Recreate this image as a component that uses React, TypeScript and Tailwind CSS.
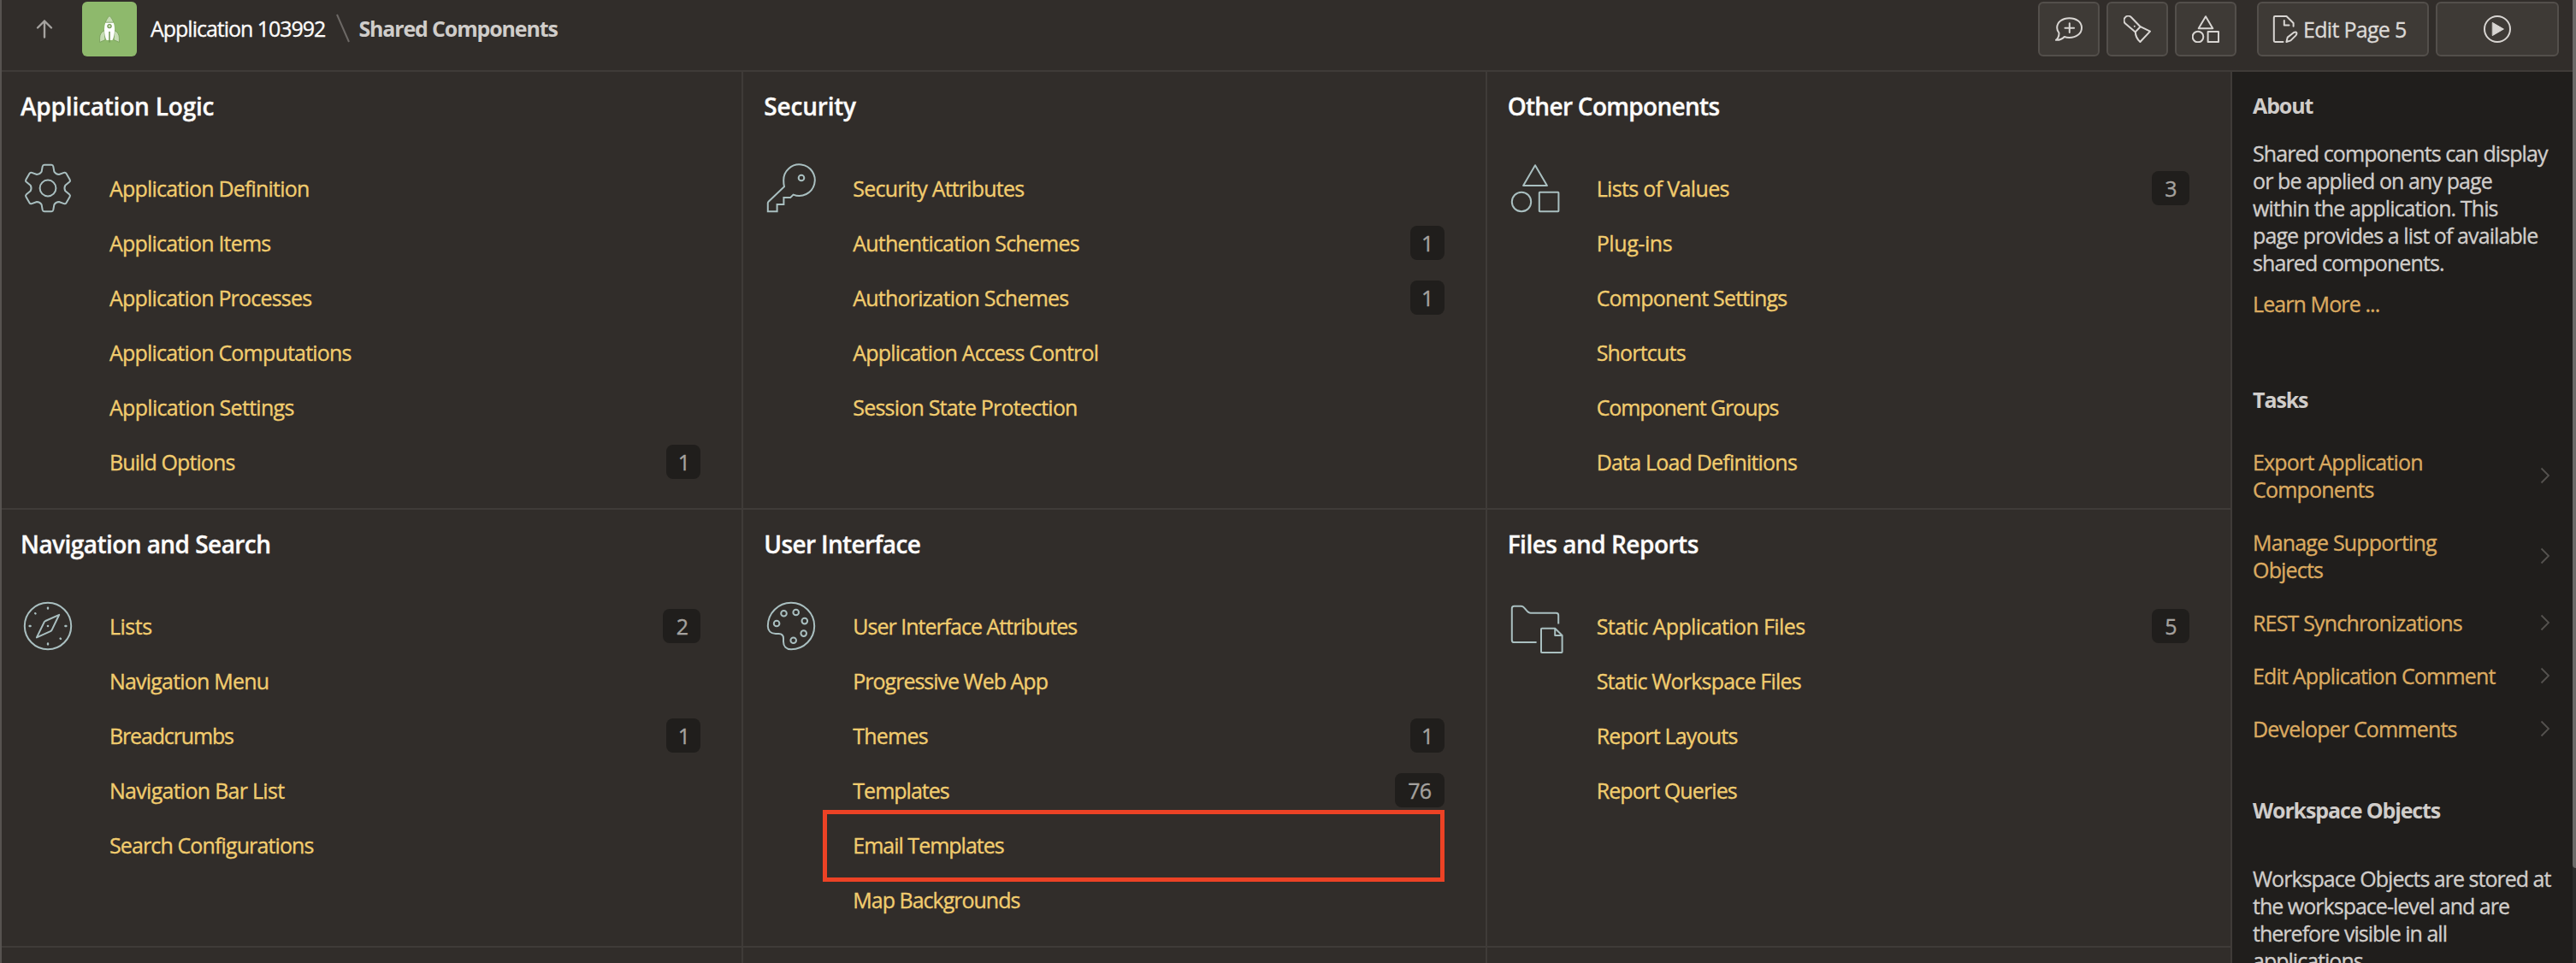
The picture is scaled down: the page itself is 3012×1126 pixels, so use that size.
import type { ReactNode } from "react";

type Item = { label: string; tracking?: string; count?: string; countWidth?: string; highlighted?: boolean };
type Region = { title: string; tracking: string; icon: ReactNode; items: Item[] };

const regionIconClass = "block size-16 shrink-0 text-[#a9bfc0]";

function RegionIcon({ children }: { children: ReactNode }) {
  return (
    <svg className={regionIconClass} viewBox="0 0 64 64" fill="none" stroke="currentColor" strokeWidth="2" strokeLinejoin="round" strokeLinecap="round">
      {children}
    </svg>
  );
}

function gearPath() {
  const rotate = (x: number, y: number, k: number) => {
    const a = (k * Math.PI) / 3;
    const px = 32 + x * Math.cos(a) - y * Math.sin(a);
    const py = 32 + x * Math.sin(a) + y * Math.cos(a);
    return `${px.toFixed(2)} ${py.toFixed(2)}`;
  };
  let d = "";
  for (let k = 0; k < 6; k++) {
    const p = (x: number, y: number) => rotate(x, y, k);
    d += `${k === 0 ? "M" : "L"}${p(-7.4, -19.2)}L${p(-6.3, -25.4)}Q${p(-5.9, -27.2)} ${p(-4.2, -27.2)}L${p(4.2, -27.2)}Q${p(5.9, -27.2)} ${p(6.3, -25.4)}L${p(7.4, -19.2)}Q${p(9.3, -16.1)} ${p(12.9, -16)}`;
  }
  return d + "Z";
}

const GearIcon = () => (
  <RegionIcon>
    <path d={gearPath()} />
    <circle cx="32" cy="32" r="9.4" />
  </RegionIcon>
);

const KeyIcon = () => (
  <RegionIcon>
    <path d="M24 30.3C23.2 27.5 23.2 25.5 23.2 22.7A18.3 18.3 0 1 1 34.6 39.6L31.2 43H23.4V51H15.6V59.2H4.8V49.6Q4.8 48.6 5.6 47.8Z" strokeLinejoin="miter" />
    <circle cx="44" cy="20" r="3.3" />
  </RegionIcon>
);

const ShapesIcon = () => (
  <RegionIcon>
    <path d="M32 5.2L45.9 29.1H18.1Z" />
    <circle cx="16" cy="48" r="11.2" />
    <rect x="36.8" y="36.8" width="22.6" height="22.4" rx="0.6" />
  </RegionIcon>
);

const CompassIcon = () => (
  <RegionIcon>
    <circle cx="32" cy="32" r="27.2" />
    <path d="M45.2 18.8L36.6 36.6Q36 37.4 35 38.1L18.9 45.4L27.6 27.6Q28.2 26.6 29.2 26Z" />
    <path d="M32 10.6v.9M32 52.5v.9M10.6 32h1M52.4 32h1M17.2 17.2l.3.3M46.6 46.6l.4.4" strokeWidth="2.4" />
    <circle cx="32" cy="32" r="1.3" fill="currentColor" stroke="none" />
  </RegionIcon>
);

const PaletteIcon = () => (
  <RegionIcon>
    <path d="M32 4.8C47 4.8 59.2 17 59.2 32C59.2 47 47 59.2 32 59.2C26.3 59.2 23 55.6 23 50.2V46.4C23 42.6 21.6 40.9 17.6 40.9H14C8.4 40.9 4.8 37.4 4.8 32C4.8 17 17 4.8 32 4.8Z" />
    <circle cx="15.1" cy="29" r="3.3" />
    <circle cx="23.5" cy="17.3" r="3.3" />
    <circle cx="37.7" cy="16" r="3.3" />
    <circle cx="47.8" cy="26.1" r="3.3" />
    <circle cx="46.7" cy="40.6" r="3.3" />
    <circle cx="34.7" cy="48.8" r="3.3" />
  </RegionIcon>
);

const FolderIcon = () => (
  <svg className="-mr-1 block h-16 w-[68px] shrink-0 text-[#a9bfc0]" viewBox="0 0 68 64" fill="none" stroke="currentColor" strokeWidth="2" strokeLinejoin="round">
    <path d="M33.6 51H7.4Q4.8 51 4.8 48.4V11.4Q4.8 8.8 7.4 8.8H15.6C20.4 8.8 21.6 16.8 26.8 16.8H56.6Q59.2 16.8 59.2 19.4V29.5" />
    <path d="M40 34.8H55.2L63.6 43V62.2Q63.6 63 62.8 63H39.8Q39 63 39 62.2V35.6Q39 34.8 40 34.8ZM55.2 34.8V43H63.6" />
  </svg>
);

const regions: Region[] = [
  {
    title: "Application Logic",
    tracking: "tracking-[-0.2px]",
    icon: <GearIcon />,
    items: [
      { label: "Application Definition" },
      { label: "Application Items" },
      { label: "Application Processes" },
      { label: "Application Computations" },
      { label: "Application Settings", tracking: "tracking-[-0.7px]" },
      { label: "Build Options", tracking: "tracking-[-0.9px]", count: "1", countWidth: "w-10" },
    ],
  },
  {
    title: "Security",
    tracking: "tracking-[-0.2px]",
    icon: <KeyIcon />,
    items: [
      { label: "Security Attributes" },
      { label: "Authentication Schemes", count: "1", countWidth: "w-10" },
      { label: "Authorization Schemes", count: "1", countWidth: "w-10" },
      { label: "Application Access Control" },
      { label: "Session State Protection" },
    ],
  },
  {
    title: "Other Components",
    tracking: "tracking-[-0.7px]",
    icon: <ShapesIcon />,
    items: [
      { label: "Lists of Values", tracking: "tracking-[-0.65px]", count: "3", countWidth: "w-11" },
      { label: "Plug-ins", tracking: "tracking-[-0.4px]" },
      { label: "Component Settings" },
      { label: "Shortcuts" },
      { label: "Component Groups", tracking: "tracking-[-1.1px]" },
      { label: "Data Load Definitions" },
    ],
  },
  {
    title: "Navigation and Search",
    tracking: "tracking-[-0.55px]",
    icon: <CompassIcon />,
    items: [
      { label: "Lists", tracking: "tracking-[-0.5px]", count: "2", countWidth: "w-11" },
      { label: "Navigation Menu" },
      { label: "Breadcrumbs", tracking: "tracking-[-1.15px]", count: "1", countWidth: "w-10" },
      { label: "Navigation Bar List", tracking: "tracking-[-0.72px]" },
      { label: "Search Configurations", tracking: "tracking-[-0.88px]" },
    ],
  },
  {
    title: "User Interface",
    tracking: "tracking-[-0.65px]",
    icon: <PaletteIcon />,
    items: [
      { label: "User Interface Attributes", tracking: "tracking-[-1px]" },
      { label: "Progressive Web App", tracking: "tracking-[-1px]" },
      { label: "Themes", count: "1", countWidth: "w-10" },
      { label: "Templates", tracking: "tracking-[-1px]", count: "76", countWidth: "w-[58px]" },
      { label: "Email Templates", tracking: "tracking-[-1px]", highlighted: true },
      { label: "Map Backgrounds", tracking: "tracking-[-1px]" },
    ],
  },
  {
    title: "Files and Reports",
    tracking: "tracking-[-0.5px]",
    icon: <FolderIcon />,
    items: [
      { label: "Static Application Files", tracking: "tracking-[-0.62px]", count: "5", countWidth: "w-11" },
      { label: "Static Workspace Files" },
      { label: "Report Layouts" },
      { label: "Report Queries", tracking: "tracking-[-0.9px]" },
    ],
  },
];

const tasks = [
  ["Export Application", "Components"],
  ["Manage Supporting", "Objects"],
  ["REST Synchronizations"],
  ["Edit Application Comment"],
  ["Developer Comments"],
];

function RegionCard({ region, lastColumn }: { region: Region; lastColumn: boolean }) {
  return (
    <section className={`h-[512px] border-b-2 border-[#3f3b38] pl-6 ${lastColumn ? "" : "border-r-2"}`}>
      <h2 className={`flex h-[104px] items-start pt-5 text-[28px] leading-10 font-semibold text-[#fcfbfa] ${region.tracking}`}>{region.title}</h2>
      <div className="flex">
        {region.icon}
        <ul className="ml-10 flex-1">
          {region.items.map((item) => (
            <li key={item.label} className="relative flex h-16 items-center justify-between pr-12">
              <a className={`text-[#f1cc6e] ${item.tracking ?? "tracking-[-0.8px]"}`}>{item.label}</a>
              {item.count && (
                <span className={`flex h-10 items-center justify-center rounded-lg bg-[#201e1c] pb-px text-[25px] tracking-[-1px] text-[#a5a29f] ${item.countWidth}`}>{item.count}</span>
              )}
              {item.highlighted && <span className="absolute -top-[9px] -left-[35px] h-[84px] w-[727px] border-5 border-[#ec4225]" />}
            </li>
          ))}
        </ul>
      </div>
    </section>
  );
}

function ToolButton({ className, children }: { className: string; children: ReactNode }) {
  return (
    <button className={`flex h-16 items-center rounded-md border-2 border-[#534f4b] bg-[#3e3a36] text-[#d8d5d2] ${className}`}>
      {children}
    </button>
  );
}

function ToolIcon({ children }: { children: ReactNode }) {
  return (
    <svg className="size-8 shrink-0" viewBox="0 0 32 32" fill="none" stroke="currentColor" strokeWidth="2" strokeLinejoin="round" strokeLinecap="round">
      {children}
    </svg>
  );
}

function Header() {
  return (
    <header className="flex h-[84px] shrink-0 items-start border-b-2 border-[#3f3b38] pt-0.5 pr-4 pl-[42px]">
      <svg className="mt-5 h-6 w-5 text-[#a5a29f]" viewBox="0 0 20 24" fill="none" stroke="currentColor" strokeWidth="2.4" strokeLinecap="round" strokeLinejoin="round">
        <path d="M2 10.5L10 2.5L18 10.5M10 2.5V21.5" />
      </svg>
      <span className="ml-[34px] flex size-16 items-center justify-center rounded-md bg-[#8eb96c]">
        <svg className="size-8" viewBox="0 0 32 32">
          <path d="M10 17.5C6.5 19.5 4.6 22.5 4.6 26.5V31.4L11 28.6ZM22 17.5C25.5 19.5 27.4 22.5 27.4 26.5V31.4L21 28.6Z" fill="#c6dcb4" stroke="#739a56" strokeWidth="0.8" />
          <path d="M16 .5C11.8 5 10 10.5 10 16.5C10 21.5 11 26 12.6 29H19.4C21 26 22 21.5 22 16.5C22 10.5 20.2 5 16 .5Z" fill="#fff" />
          <path d="M16 .5C13.6 3.2 12 5.8 11.2 8.2H20.8C20 5.8 18.4 3.2 16 .5Z" fill="#c6dcb4" stroke="#739a56" strokeWidth="0.8" />
          <circle cx="16" cy="12.6" r="2.1" fill="#c6dcb4" stroke="#6d944f" strokeWidth="1.2" />
          <path d="M16 19.5V31" stroke="#739a56" strokeWidth="1.6" strokeLinecap="round" />
        </svg>
      </span>
      <span className="ml-4 leading-[62px] tracking-[-1.02px] text-[#fcfbfa]">Application 103992</span>
      <svg className="mt-3.5 ml-[13px] h-9 w-4 text-[#6c6865]" viewBox="0 0 16 36" fill="none" stroke="currentColor" strokeWidth="2">
        <path d="M1 1L15 33" />
      </svg>
      <span className="ml-[10px] leading-[62px] font-bold tracking-[-1.15px] text-[#d0cdca] [-webkit-text-stroke:0px]">Shared Components</span>
      <div className="ml-auto flex">
        <ToolButton className="w-18 justify-center">
          <ToolIcon>
            <path d="M4.5 20.5C3 18.5 2.2 16.5 2.2 14.4C2.2 7.8 8.6 3.2 16.6 3.2C24.6 3.2 31 7.8 31 14.4C31 21.2 24.6 25.9 16.6 25.9C14.4 25.9 12.5 25.6 10.8 25C8.5 27.6 5 29 1 28.8C3.8 26.4 4.6 23.6 4.5 20.5Z" />
            <path d="M16.8 9.3V20M11.5 14.7H22.1" />
          </ToolIcon>
        </ToolButton>
        <ToolButton className="ml-2 w-18 justify-center">
          <ToolIcon>
            <path d="M2 9.5A5 5 0 0 1 9 2.2L19.6 13.2L13.8 19.4Z" />
            <path d="M19.6 13.2Q25 15.8 31 18.6L19.4 31Q14 26.2 13.8 19.4" />
            <circle cx="12.8" cy="12.8" r="1" fill="currentColor" stroke="none" />
          </ToolIcon>
        </ToolButton>
        <ToolButton className="ml-2 w-18 justify-center">
          <ToolIcon>
            <path d="M16 1.2L24.3 15.2H7.7Z" />
            <circle cx="7" cy="25" r="6.3" />
            <rect x="18.6" y="19" width="12.4" height="12" />
          </ToolIcon>
        </ToolButton>
        <ToolButton className="ml-6 w-[201px] gap-[5px] pl-[15px]">
          <ToolIcon>
            <path d="M13.5 31H4.2Q2.8 31 2.8 29.6V2.4Q2.8 1 4.2 1H17.5L25.6 9V12.8" />
            <path d="M14.8 6V11.6H20.5" />
            <path d="M17.4 31L18.8 25.6L26 20Q28.8 18.6 29.4 20.6Q29.6 22 28.2 23.6L22.4 29.4Z" />
          </ToolIcon>
          <span className="leading-none tracking-[-0.7px] whitespace-nowrap text-[#dcd9d6]">Edit Page 5</span>
        </ToolButton>
        <ToolButton className="ml-2 w-36 justify-center">
          <ToolIcon>
            <circle cx="16" cy="16" r="15" />
            <path d="M10.6 8.6L23.4 16L10.6 23.4Z" fill="currentColor" strokeWidth="1" />
          </ToolIcon>
        </ToolButton>
      </div>
    </header>
  );
}

function Sidebar() {
  return (
    <aside className="h-full w-[400px] shrink-0 overflow-hidden border-l-2 border-[#3f3b38] bg-[#201e1c] pr-[26px] pl-6 leading-8 tracking-[-0.9px] whitespace-nowrap text-[#d0cdca]">
      <h3 className="pt-[23px] font-bold tracking-[-1.1px] [-webkit-text-stroke:0px]">About</h3>
      <p className="mt-6">
        Shared components can display<br />or be applied on any page<br />within the application. This<br />page provides a list of available<br />shared components.
      </p>
      <a className="mt-4 block text-[#dbaa60]">Learn More ...</a>
      <h3 className="mt-20 font-bold tracking-[-1.1px] [-webkit-text-stroke:0px]">Tasks</h3>
      <ul className="mt-[26px] tracking-[-0.82px]">
        {tasks.map((lines) => (
          <li key={lines[0]} className="flex items-center justify-between py-[15px]">
            <a className="text-[#dbaa60]">
              {lines.map((line) => (
                <span key={line} className="block">{line}</span>
              ))}
            </a>
            <svg className="h-5 w-3 text-[#55524f]" viewBox="0 0 12 20" fill="none" stroke="currentColor" strokeWidth="1.8">
              <path d="M1.5 1.5L10 10L1.5 18.5" />
            </svg>
          </li>
        ))}
      </ul>
      <h3 className="mt-12 font-bold tracking-[-1.13px] [-webkit-text-stroke:0px]">Workspace Objects</h3>
      <p className="mt-12 tracking-[-0.98px]">
        Workspace Objects are stored at<br />the workspace-level and are<br />therefore visible in all<br />applications.
      </p>
    </aside>
  );
}

export default function App() {
  return (
    <div className="flex h-[1126px] w-[3012px] overflow-hidden bg-[#312d2a] font-['Open_Sans',sans-serif] text-[25px] leading-8 [-webkit-text-stroke:0.35px]">
      <div className="relative flex min-w-0 flex-1 flex-col">
        <Header />
        <div className="flex min-h-0 flex-1">
          <main className="grid flex-1 grid-cols-3 content-start overflow-hidden">
            {regions.map((region, i) => (
              <RegionCard key={region.title} region={region} lastColumn={i % 3 === 2} />
            ))}
            <div className="h-6 border-r-2 border-[#3f3b38]" />
            <div className="h-6 border-r-2 border-[#3f3b38]" />
          </main>
          <Sidebar />
        </div>
        <div className="absolute inset-y-0 left-0 w-0.5 bg-[#575350]" />
      </div>
      <div className="w-1 shrink-0 bg-[#2c2b2a]">
        <div className="h-[1015px] rounded-bl bg-[#6b6967]" />
      </div>
    </div>
  );
}
